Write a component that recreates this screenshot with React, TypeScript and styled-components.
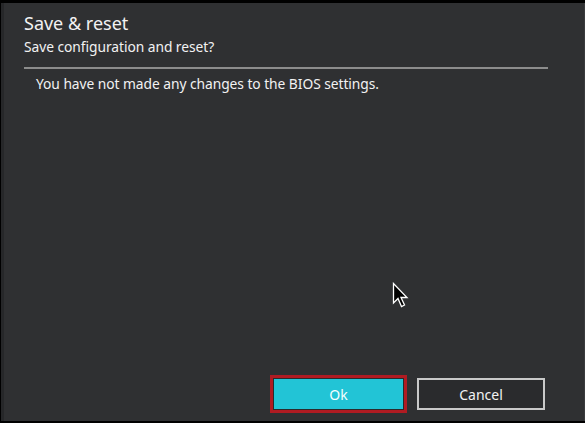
import styled, { createGlobalStyle } from 'styled-components';

const Global = createGlobalStyle`
  html, body {
    margin: 0;
    padding: 0;
    background: #000;
  }
  body {
    font-family: "Noto Sans", "Open Sans", sans-serif;
  }
`;

const Frame = styled.div`
  position: relative;
  width: 585px;
  height: 423px;
  box-sizing: border-box;
  padding: 3px 0 2px 1px;
  background: #000;
`;

const Dialog = styled.div`
  height: 100%;
  box-sizing: border-box;
  background: #2f3032;
  border-left: 3px solid #262729;
  border-right: 1px solid #3a3b3d;
  display: flex;
  flex-direction: column;
  padding: 7px 36px 0 20px;
  color: #f2f2f2;
`;

const Title = styled.h1`
  margin: 0;
  font-size: 18px;
  font-weight: 400;
  line-height: 26px;
`;

const Subtitle = styled.p`
  margin: 0;
  font-size: 13.8px;
  letter-spacing: -0.05px;
  line-height: 22px;
`;

const Rule = styled.hr`
  margin: 9px 0 0;
  border: none;
  height: 2px;
  background: #8c8c8c;
`;

const Message = styled.p`
  margin: 4px 0 0 12px;
  font-size: 13.8px;
  letter-spacing: -0.05px;
  line-height: 22px;
  flex: 1;
`;

const Buttons = styled.div`
  display: flex;
  justify-content: flex-end;
  gap: 10px;
  padding: 0 0 8px;
  margin-right: 3px;
`;

const Button = styled.button<{ $primary?: boolean }>`
  width: ${(p) => (p.$primary ? '137px' : '128px')};
  height: ${(p) => (p.$primary ? '38px' : '32px')};
  margin-top: ${(p) => (p.$primary ? '0' : '3px')};
  box-sizing: border-box;
  font-family: "Noto Sans", "Open Sans", sans-serif;
  font-size: 14px;
  color: ${(p) => (p.$primary ? '#f4ffff' : '#f2f2f2')};
  background: ${(p) => (p.$primary ? '#22c4d6' : '#2a2b2d')};
  border: ${(p) => (p.$primary ? '3px solid #b01b22' : '2px solid #c9c9c9')};
  box-shadow: ${(p) => (p.$primary ? 'inset 0 0 0 1px #2a2b2d' : 'none')};
  padding: 0;
`;

const Cursor = styled.svg`
  position: absolute;
  left: 392px;
  top: 282px;
`;

export default function App() {
  return (
    <>
      <Global />
      <Frame>
        <Dialog>
          <Title>Save &amp; reset</Title>
          <Subtitle>Save configuration and reset?</Subtitle>
          <Rule />
          <Message>You have not made any changes to the BIOS settings.</Message>
          <Buttons>
            <Button $primary>Ok</Button>
            <Button>Cancel</Button>
          </Buttons>
        </Dialog>
        <Cursor width="20" height="30" viewBox="0 0 20 30">
          <path
            d="M1.5 1.5 L1.5 21 L6 16.5 L9.5 24.5 L12.5 23 L9 15.5 L15 15.5 Z"
            fill="#000"
            stroke="#fff"
            strokeWidth="1.3"
            strokeLinejoin="miter"
          />
        </Cursor>
      </Frame>
    </>
  );
}
